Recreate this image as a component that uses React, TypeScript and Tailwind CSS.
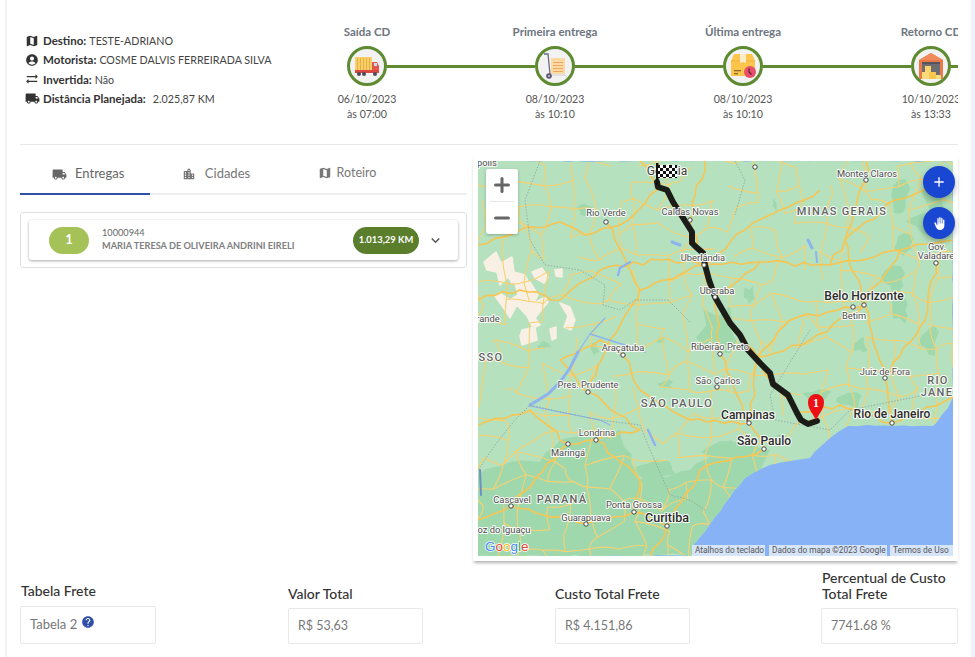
import React from "react";
import { MdMap, MdAccountCircle, MdSyncAlt, MdLocalShipping, MdLocationCity, MdHelp, MdExpandMore, MdBackHand, MdAdd } from "react-icons/md";
import { Plus, Minus } from "lucide-react";

const FONT = "font-['Lato','Noto_Sans',sans-serif]";

function TruckArt() {
  return (
    <svg width="26" height="26" viewBox="0 0 26 26">
      <rect x="1" y="4" width="17" height="14" fill="#f9cf6a" />
      {[3, 6, 9, 12, 15].map((x) => <rect key={x} x={x} y="5" width="1" height="12" fill="#e7ae45" />)}
      <path d="M18 9h5l2 4v6H18z" fill="#e4574c" />
      <rect x="20" y="10" width="3" height="3" fill="#bfe0ef" />
      <rect x="1" y="17" width="24" height="3" fill="#d9473f" />
      <circle cx="5" cy="21" r="2" fill="#4b4a5e" /><circle cx="10" cy="21" r="2" fill="#4b4a5e" /><circle cx="21" cy="21" r="2" fill="#4b4a5e" />
    </svg>
  );
}
function CartArt() {
  return (
    <svg width="26" height="28" viewBox="0 0 26 28">
      <rect x="9" y="6" width="14" height="16" fill="#fbd9a4" />
      {[10, 13, 16, 19].map((y) => <rect key={y} x="11" y={y} width="10" height="1" fill="#f0a860" />)}
      <path d="M2 2h4l2 20" stroke="#6d6a80" strokeWidth="1.3" fill="none" />
      <path d="M8 23h15l2 2" stroke="#c9c9c9" strokeWidth="0.8" fill="none" />
      <circle cx="7" cy="24" r="2.8" fill="#5a5674" /><circle cx="7" cy="24" r="1" fill="#c9c7d6" />
    </svg>
  );
}
function BoxArt() {
  return (
    <svg width="28" height="28" viewBox="0 0 28 28">
      <path d="M5 2h18l3 7v15H2V9z" fill="#fcc54c" />
      <path d="M2 9h24" stroke="#f2ae35" strokeWidth="0.8" />
      <path d="M11 2h6v9l-3-1-3 1z" fill="#fbeccb" />
      <rect x="5" y="18" width="7" height="1.3" fill="#8a6a2c" /><rect x="5" y="21" width="4" height="1.3" fill="#8a6a2c" />
      <circle cx="21" cy="20" r="6" fill="#e8506a" />
      <path d="M20 16.5v3.5l2.5 2.5" stroke="#5a2030" strokeWidth="1.2" fill="none" />
    </svg>
  );
}
function WarehouseArt() {
  return (
    <svg width="28" height="28" viewBox="0 0 28 28">
      <path d="M14 1L26 8v19H2V8z" fill="#ea7a4a" />
      <path d="M14 1L26 8H2z" fill="#f08a5a" />
      <rect x="5" y="10" width="18" height="17" fill="#6c6c72" />
      <rect x="5" y="10" width="18" height="2" fill="#55555b" />
      <rect x="8" y="14" width="6" height="6" fill="#f8d46a" />
      <rect x="5" y="20" width="7" height="7" fill="#fbdc7a" /><rect x="12" y="20" width="7" height="7" fill="#f6c64f" /><rect x="19" y="23" width="5" height="4" fill="#fbdc7a" />
    </svg>
  );
}

function TimelineStep({ title, date, time, art, first }: { title: string; date: string; time: string; art: React.ReactNode; first?: boolean }) {
  return (
    <div className="w-[188px] shrink-0 flex flex-col items-center">
      <div className="h-[16px] text-[11.5px] leading-[16px] font-bold text-[#6d7580] whitespace-nowrap">{title}</div>
      <div className="w-full flex items-center mt-[6px]">
        <div className={`flex-1 h-[3px] ${first ? "bg-transparent" : "bg-[#5e8a30]"}`} />
        <div className="w-[40px] h-[40px] shrink-0 rounded-full border-[3px] border-[#5e8a30] bg-[#f2f2f2] flex items-center justify-center overflow-hidden">{art}</div>
        <div className="flex-1 h-[3px] bg-[#5e8a30]" />
      </div>
      <div className="mt-[6px] text-[10.6px] leading-[15px] text-[#555] whitespace-nowrap">{date}</div>
      <div className="text-[10.6px] leading-[15px] text-[#555] whitespace-nowrap">{time}</div>
    </div>
  );
}

function InfoRow({ icon, label, value, gap }: { icon: React.ReactNode; label: string; value: string; gap?: string }) {
  return (
    <div className="flex items-center h-[19.3px] text-[#444] whitespace-nowrap">
      <span className="w-[18px] shrink-0 flex text-[#333] -ml-[1px]">{icon}</span>
      <span className="flex items-baseline">
        <span className="font-bold text-[#333] text-[11.5px]">{label}</span>
        <span className={`text-[10.7px] ${gap ?? "ml-[3px]"}`}>{value}</span>
      </span>
    </div>
  );
}

function rng(seed: number) {
  let s = seed;
  return () => {
    s = (s * 16807) % 2147483647;
    return (s - 1) / 2147483646;
  };
}

function networkPaths() {
  const r = rng(4217);
  const step = 23;
  const nx = 21;
  const ny = 18;
  const pts: [number, number][][] = [];
  for (let j = 0; j <= ny; j++) {
    const row: [number, number][] = [];
    for (let i = 0; i <= nx; i++) {
      row.push([478 + i * step + (r() - 0.5) * 17, 161 + j * step + (r() - 0.5) * 17]);
    }
    pts.push(row);
  }
  const seg = (p: [number, number], q: [number, number]) =>
    `M${p[0].toFixed(1)} ${p[1].toFixed(1)}Q${((p[0] + q[0]) / 2 + (r() - 0.5) * 9).toFixed(1)} ${((p[1] + q[1]) / 2 + (r() - 0.5) * 9).toFixed(1)} ${q[0].toFixed(1)} ${q[1].toFixed(1)}`;
  const out: string[] = [];
  for (let j = 0; j <= ny; j++) {
    for (let i = 0; i <= nx; i++) {
      const p = pts[j][i];
      if (i < nx && r() < 0.68) out.push(seg(p, pts[j][i + 1]));
      if (j < ny && r() < 0.68) out.push(seg(p, pts[j + 1][i]));
    }
  }
  return out.join("");
}

function wiggle(d: string, seed: number, amp: number) {
  const r = rng(seed);
  const pts = d.slice(1).split("L").map((s) => s.split(" ").map(Number));
  let out = `M${pts[0][0]} ${pts[0][1]}`;
  for (let i = 1; i < pts.length; i++) {
    const [ax, ay] = pts[i - 1];
    const [bx, by] = pts[i];
    const len = Math.hypot(bx - ax, by - ay);
    const n = Math.max(1, Math.round(len / 9));
    for (let k = 1; k <= n; k++) {
      const t = k / n;
      const j = k === n ? 0 : (r() - 0.5) * amp;
      out += `L${(ax + (bx - ax) * t - ((by - ay) / (len || 1)) * j).toFixed(1)} ${(ay + (by - ay) * t + ((bx - ax) / (len || 1)) * j).toFixed(1)}`;
    }
  }
  return out;
}

function jagged(x: number, y: number, a: number, b: number, seed: number) {
  const r = rng(seed + 11);
  const out: string[] = [];
  for (let i = 0; i < 11; i++) {
    const t = (i / 11) * Math.PI * 2;
    const k = 0.55 + r() * 0.75;
    out.push(`${(x + Math.cos(t) * a * k).toFixed(1)} ${(y + Math.sin(t) * b * k).toFixed(1)}`);
  }
  return `M${out.join("L")}Z`;
}

const NETWORK = networkPaths();

type L = [string, number, number, number?, string?, number?, string?];
const LABELS: L[] = [
  ["polis", 487, 166, 9.3], ["Rio Verde", 606, 216, 9.3], ["Caldas Novas", 690, 215, 9.3], ["Uberlândia", 703, 261, 9.3],
  ["Uberaba", 717, 294, 9.3], ["rande", 488, 322, 9.3], ["Araçatuba", 623, 351, 9.3], ["Ribeirão Preto", 720, 350, 9.3],
  ["Pres. Prudente", 588, 388, 9.3], ["São Carlos", 718, 384, 9.3], ["Londrina", 597, 436, 9.3], ["Maringá", 568, 456, 9.3],
  ["Cascavel", 512, 503, 9.3], ["Ponta Grossa", 634, 508, 9.3], ["Guarapuava", 586, 521, 9.3], ["oz do Iguaçu", 504, 533, 9.3],
  ["Montes Claros", 867, 177, 9.3], ["Betim", 854, 319, 9.3], ["Gov.", 937, 250, 9.3], ["Valadare", 936, 259, 9.3],
  ["Juiz de Fora", 885, 375, 9.3],
  ["Goiânia", 667, 175, 12, "#333", 400], ["Campinas", 748, 419, 12, "#222", 500], ["São Paulo", 764, 445, 12, "#222", 500],
  ["Curitiba", 667, 522, 12.5, "#222", 500], ["Belo Horizonte", 864, 300, 12, "#222", 500], ["Rio de Janeiro", 892, 418, 12, "#222", 500],
  ["MINAS GERAIS", 842, 215, 11, "#5c5c5c", 500, "1.3px"], ["SÃO PAULO", 677, 407, 11.5, "#5c5c5c", 500, "1.3px"], ["PARANÁ", 562, 503, 11, "#5c5c5c", 500, "1.3px"],
  ["SSO", 491, 361, 11, "#5c5c5c", 500, "1.3px"], ["RIO", 938, 384, 11, "#5c5c5c", 500, "1.3px"], ["JANE", 937, 396, 11, "#5c5c5c", 500, "1.3px"],
];
const DOTS: [number, number][] = [[606, 222], [690, 220], [704, 265], [715, 297], [623, 355], [720, 354], [588, 392], [717, 387], [749, 423], [764, 449], [596, 440], [568, 444], [511, 506], [634, 512], [586, 524], [667, 526], [866, 180], [864, 305], [853, 307], [936, 263], [885, 378], [892, 423], [755, 167]];
const HIGHWAYS = [
  "M478 300L520 290L560 300L600 270L660 260L704 265L760 262L830 265L900 250L953 240",
  "M640 161L657 190L620 225L585 235L560 222L520 230L478 245",
  "M705 161L690 220L704 265L715 297L730 325L757 357L775 387L797 413L840 405L892 423L953 397",
  "M866 161L866 180L845 240L864 305L885 378L892 423",
  "M936 263L925 320L885 378",
  "M864 305L810 340L757 357L749 423L764 449",
  "M623 355L640 390L690 420L749 423",
  "M588 392L560 360L600 340L623 355",
  "M588 392L640 430L596 440L568 444L511 506L478 520",
  "M764 449L700 470L667 526L634 512L586 524L511 506",
  "M667 526L650 556",
  "M568 444L530 410L478 425",
  "M596 440L640 480L634 512",
  "M749 423L720 354L715 297L760 262",
  "M606 222L640 290L704 265",
  "M640 290L610 340L588 392",
  "M900 250L864 305L790 320L757 357",
  "M820 190L780 210L745 230L704 265",
  "M830 265L845 240L895 200L953 180",
].map((d, i) => wiggle(d, 900 + i * 37, 5));
const CREAM = [
  "M484 262L496 252L501 263L512 257L514 272L525 275L528 281L512 283L508 277L500 285L497 272L487 270Z",
  "M515 283L530 282L538 295L534 303L545 297L548 302L535 318L540 325L533 328L527 316L517 305L510 318L505 310L495 296L500 293L510 300L518 295Z",
  "M532 272L542 268L548 277L544 283L535 278Z",
  "M555 270L562 269L562 277L556 276Z",
  "M522 330L535 327L537 340L528 343L522 345L520 336Z",
  "M550 329L556 327L556 338L552 340Z",
  "M560 303L570 307L575 320L571 330L564 327L568 316Z",
];
const PATCHES: [number, number, number, number][] = [
  [586, 210, 10, 7], [545, 345, 7, 4], [595, 348, 4, 6], [775, 205, 3, 6], [900, 200, 10, 18], [925, 225, 16, 10], [905, 245, 10, 10],
  [895, 280, 12, 12], [900, 310, 10, 12], [935, 200, 12, 22], [720, 330, 20, 22], [750, 295, 6, 8], [860, 345, 8, 8], [665, 385, 8, 5], [660, 340, 5, 3],
  [930, 340, 10, 14], [820, 395, 14, 6], [850, 400, 16, 8], [780, 440, 10, 6], [725, 455, 30, 14], [660, 470, 22, 10],
];
const LAND = wiggle("M478 161L953 161L953 397L948 408L937 422L933 426L893 426L867 425L848 426L838 432L830 438L820 447L810 458L790 461L770 465L745 478L730 497L700 537L692 547L693 556L478 556", 77, 1.6) + "Z";
const SOUTH = wiggle("M478 475L510 462L540 462L560 440L620 430L640 480L690 470L730 440L770 450L760 470L690 556L478 556", 55, 5) + "Z";

function MapCanvas() {
  return (
    <svg viewBox="478 161 475 395" className="block w-[475px] h-[395px]">
      <defs>
        <clipPath id="land"><path d={LAND} /></clipPath>
        <pattern id="check" width="6" height="6" patternUnits="userSpaceOnUse">
          <rect width="6" height="6" fill="#fff" /><rect width="3" height="3" fill="#111" /><rect x="3" y="3" width="3" height="3" fill="#111" />
        </pattern>
      </defs>
      <rect x="478" y="161" width="475" height="395" fill="#87b2f6" />
      <g clipPath="url(#land)">
        <rect x="478" y="161" width="475" height="395" fill="#b5e1bf" />
        <g fill="#a0d8ae">
          <path d={SOUTH} />
          {PATCHES.map(([x, y, a, b], i) => <path key={`${x}-${y}`} d={jagged(x, y, a, b, i * 31 + 3)} />)}
        </g>
        <g fill="#f8f0e4">
          {CREAM.map((d) => <path key={d} d={d} stroke="#f8f0e4" strokeWidth="1.5" strokeLinejoin="round" />)}
        </g>
        <path d={NETWORK} stroke="#f6d170" strokeWidth="1.1" fill="none" />
        {HIGHWAYS.map((d) => <path key={d} d={d} stroke="#f7c552" strokeWidth="1.6" fill="none" strokeLinejoin="round" />)}
        <g stroke="#8db4ee" fill="none" strokeLinecap="round">
          <path d="M530 405L548 394L560 382L570 368L578 352" strokeWidth="3" />
          <path d="M578 352L590 334L605 318" strokeWidth="1.2" />
          <path d="M590 334L625 345L645 352" strokeWidth="1.5" />
          <path d="M530 406L560 412L600 420L610 425" strokeWidth="1.2" />
          <path d="M630 262L620 268L618 275" strokeWidth="2.5" />
          <path d="M680 245L672 242" strokeWidth="3" />
          <path d="M648 430L655 445" strokeWidth="2.5" />
          <path d="M808 240L812 248" strokeWidth="3" />
          <path d="M816 252L817 262" strokeWidth="2" />
          <path d="M480 470L481 495" stroke="#6e8fc4" strokeWidth="2" />
        </g>
        <g stroke="#8a9a98" strokeWidth="0.7" strokeDasharray="1.5 1.5" fill="none">
          <path d="M540 161L525 200L530 240L545 265L580 270L605 285L603 305L620 310L635 300L668 300L690 322" />
          <path d="M478 470L495 445L515 420L530 405L560 412L600 420L640 425L650 450L670 495L690 500L705 510" />
          <path d="M810 330L770 395L775 420L830 430L850 410L925 395" />
          <path d="M735 161L745 180L735 215" />
        </g>
      </g>
      <path d="M657 182L658 187L667 190L673 202L680 213L692 232L692 243L696 247L703 253L705 265L709 280L715 297L730 323L740 335L748 350L760 363L770 373L773 384L788 395L793 405L797 413L801 420L808 424L817 421" fill="none" stroke="#1b1c18" strokeWidth="6" strokeLinejoin="round" strokeLinecap="round" />
      <g fontFamily="Roboto, sans-serif" textAnchor="middle">
        {LABELS.map(([t, x, y, s, c, w, ls]) => (
          <text key={t} x={x} y={y} fontSize={s ?? 9.3} fill={c ?? "#444"} fontWeight={w ?? 400} letterSpacing={ls} stroke="#ffffff" strokeWidth="2" paintOrder="stroke" strokeLinejoin="round" opacity="0.95">{t}</text>
        ))}
      </g>
      {DOTS.map(([x, y]) => <circle key={`${x}-${y}`} cx={x} cy={y} r="2.2" fill="#fff" stroke="#444" strokeWidth="1" />)}
      <rect x="656" y="163" width="2.5" height="22" fill="#111" />
      <path d="M658 165H677V178H658Z" fill="url(#check)" />
      <path d="M816 420C812 412 808 409 808 402A8 8 0 0 1 824 402C824 409 820 412 816 420Z" fill="#ee0f12" />
      <text x="816" y="407" fontSize="12" fontWeight="700" textAnchor="middle" fill="#fff" fontFamily="'Liberation Serif', serif">1</text>
      <g fontFamily="'Liberation Sans', sans-serif" fontSize="13.5" fontWeight="400" stroke="#fff" strokeWidth="1.4" paintOrder="stroke">
        <text x="485" y="551" fill="#4285f4">G<tspan fill="#ea4335">o</tspan><tspan fill="#fbbc05">o</tspan><tspan fill="#4285f4">g</tspan><tspan fill="#34a853">l</tspan><tspan fill="#ea4335">e</tspan></text>
      </g>
      <rect x="692" y="545" width="73" height="11" fill="#d6e4f8" />
      <rect x="769" y="545" width="118" height="11" fill="#d6e4f8" />
      <rect x="890" y="545" width="63" height="11" fill="#d6e4f8" />
      <g fontFamily="Roboto, sans-serif" fontSize="8.3" fill="#555">
        <text x="695" y="553">Atalhos do teclado</text>
        <text x="772" y="553">Dados do mapa ©2023 Google</text>
        <text x="893" y="553">Termos de Uso</text>
      </g>
    </svg>
  );
}

function Field({ label, value, extra, className, boxClass, labelClass }: { label: React.ReactNode; value: string; extra?: React.ReactNode; className?: string; boxClass?: string; labelClass?: string }) {
  return (
    <div className={`flex flex-col ${className ?? ""}`}>
      <div className={`text-[14px] leading-[15.5px] text-[#333] font-medium ${labelClass ?? "mb-[7px]"}`}>{label}</div>
      <div className={`border border-[#e8e8e8] rounded-[2px] flex items-center pl-[9px] text-[#777] ${boxClass ?? "h-[36px] text-[12.5px]"}`}>
        {value}{extra}
      </div>
    </div>
  );
}

export default function App() {
  return (
    <div className={`w-[975px] h-[657px] overflow-hidden bg-white pl-[5px] ${FONT}`}>
      <div className="w-[970px] h-full border-l-2 border-r-4 border-[#f0f2f8] px-[13px]">
        <div className="h-[145px] border-b border-[#e8e8e8] flex">
          <div className="w-[253px] shrink-0 pl-[6px] pt-[31px]">
            <InfoRow icon={<MdMap size={14} />} label="Destino:" value="TESTE-ADRIANO" />
            <InfoRow icon={<MdAccountCircle size={14} />} label="Motorista:" value="COSME DALVIS FERREIRADA SILVA" />
            <InfoRow icon={<MdSyncAlt size={14} />} label="Invertida:" value="Não" />
            <InfoRow icon={<MdLocalShipping size={15} />} label="Distância Planejada:" value="2.025,87 KM" gap="ml-[7px]" />
          </div>
          <div className="w-[685px] shrink-0 overflow-hidden flex pt-[24px]">
            <TimelineStep first title="Saída CD" date="06/10/2023" time="às 07:00" art={<TruckArt />} />
            <TimelineStep title="Primeira entrega" date="08/10/2023" time="às 10:10" art={<CartArt />} />
            <TimelineStep title="Última entrega" date="08/10/2023" time="às 10:10" art={<BoxArt />} />
            <TimelineStep title="Retorno CD" date="10/10/2023" time="às 13:33" art={<WarehouseArt />} />
          </div>
        </div>

        <div className="flex pt-[10px] gap-[6px]">
          <div className="w-[447px] shrink-0">
            <div className="h-[40px] border-b-2 border-[#eceef0] flex">
              <div className="w-[130px] h-[40px] border-b-2 border-[#2f4fa8] flex items-center pl-[32px] gap-[8px] text-[13px] text-[#666]">
                <MdLocalShipping size={15} /> Entregas
              </div>
              <div className="w-[132px] h-[38px] flex items-center justify-center gap-[9px] text-[13px] text-[#777]">
                <MdLocationCity size={14} /> Cidades
              </div>
              <div className="w-[130px] h-[38px] -mt-[1px] flex items-center justify-center gap-[5px] text-[12.5px] text-[#777]">
                <MdMap size={14} /> Roteiro
              </div>
            </div>
            <div className="mt-[17px] h-[56px] border border-[#dfe0e2] rounded-[3px] px-[8px] pt-[7px]">
              <div className="h-[40px] rounded-[3px] bg-white shadow-[0_1px_3px_rgba(0,0,0,0.35)] flex items-center pl-[20px] pr-[14px]">
                <div className="w-[40px] h-[27px] rounded-full bg-[#a4c257] text-white font-bold text-[13px] flex items-center justify-center">1</div>
                <div className="ml-[13px] flex-1 min-w-0 -mt-[2px]">
                  <div className="text-[9.2px] leading-[13.5px] text-[#666]">10000944</div>
                  <div className="text-[9.2px] leading-[13.5px] font-bold text-[#808080] whitespace-nowrap">MARIA TERESA DE OLIVEIRA ANDRINI EIRELI</div>
                </div>
                <div className="w-[66px] h-[27px] rounded-full bg-[#5b7e2c] text-white font-bold text-[9.4px] flex items-center justify-center">1.013,29 KM</div>
                <MdExpandMore size={17} className="ml-[8px] text-[#555]" />
              </div>
            </div>
          </div>

          <div className="relative w-[485px] h-[406px] shrink-0 bg-white pt-[6px] px-[5px] shadow-[0_3px_3px_-1px_rgba(0,0,0,0.3)]">
            <MapCanvas />
            <div className="absolute left-[13px] top-[14px] w-[32px] h-[65px] bg-white rounded-[2px] shadow-[0_1px_3px_rgba(0,0,0,0.25)] flex flex-col items-center text-[#666]">
              <div className="h-[32px] flex items-center justify-center"><Plus size={22} strokeWidth={3} absoluteStrokeWidth /></div>
              <div className="w-[24px] h-px bg-[#e6e6e6]" />
              <div className="h-[32px] flex items-center justify-center"><Minus size={22} strokeWidth={3} absoluteStrokeWidth /></div>
            </div>
            <div className="absolute left-[450px] top-[11px] w-[32px] h-[32px] rounded-full bg-[#1a47d1] text-white flex items-center justify-center shadow-[0_3px_6px_rgba(0,0,0,0.3)]"><MdAdd size={16} /></div>
            <div className="absolute left-[450px] top-[52px] w-[32px] h-[32px] rounded-full bg-[#1a47d1] text-white flex items-center justify-center shadow-[0_3px_6px_rgba(0,0,0,0.3)]"><MdBackHand size={13} /></div>
          </div>
        </div>

        <div className="grid grid-cols-[268px_267px_266px_137px] items-end mt-[9px]">
          <Field className="w-[136px]" labelClass="pl-[1px] mb-[8px]" boxClass="h-[38px] text-[13px]" label="Tabela Frete" value="Tabela 2" extra={<MdHelp size={14} className="ml-[4px] -mt-[6px] text-[#2f4fa8]" />} />
          <Field className="w-[135px]" label="Valor Total" value="R$ 53,63" />
          <Field className="w-[135px]" label="Custo Total Frete" value="R$ 4.151,86" />
          <Field className="w-[137px]" labelClass="pl-[1px] mb-[7px]" label={<>Percentual de Custo<br />Total Frete</>} value="7741.68 %" />
        </div>
      </div>
    </div>
  );
}
